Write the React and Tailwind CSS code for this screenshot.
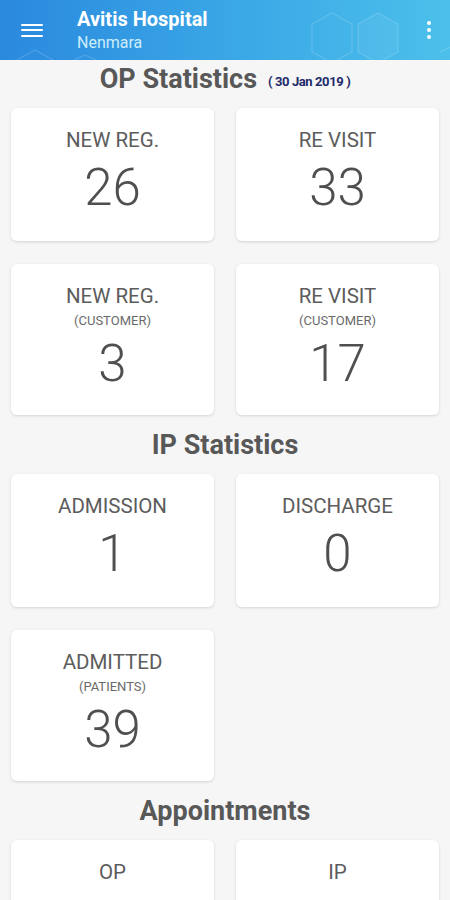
import React from 'react'

const opCards = [
  [{ label: 'NEW REG.', value: 26 }, { label: 'RE VISIT', value: 33 }],
  [{ label: 'NEW REG.', sub: '(CUSTOMER)', value: 3 }, { label: 'RE VISIT', sub: '(CUSTOMER)', value: 17 }],
]

const ipCards = [
  [{ label: 'ADMISSION', value: 1 }, { label: 'DISCHARGE', value: 0 }],
  [{ label: 'ADMITTED', sub: '(PATIENTS)', value: 39 }, null],
]

const HexBg = () => (
  <svg className="absolute inset-0 w-full h-full pointer-events-none" viewBox="0 0 450 60" preserveAspectRatio="none">
    <g fill="none" stroke="rgba(255,255,255,0.16)" strokeWidth="1.2">
      <path d="M332 13 L352 24 L352 52 L332 63 L312 52 L312 24 Z" />
      <path d="M378 13 L398 24 L398 52 L378 63 L358 52 L358 24 Z" fill="rgba(255,255,255,0.05)" />
      <path d="M35 50 L55 61 M35 50 L15 61" />
      <path d="M85 55 L100 62 M85 55 L70 62" />
      <path d="M440 52 L455 45" />
    </g>
  </svg>
)

const Header = () => (
  <div className="relative h-[60px] bg-gradient-to-r from-[#2b89de] via-[#3aa6e6] to-[#4cc0ea] flex items-center overflow-hidden">
    <HexBg />
    <div className="relative w-[77px] flex justify-center pr-[14px]">
      <div className="flex flex-col gap-[3.5px] w-[22px]">
        <span className="block h-[2px] bg-white rounded" />
        <span className="block h-[2px] bg-white rounded" />
        <span className="block h-[2px] bg-white rounded" />
      </div>
    </div>
    <div className="relative flex-1 flex flex-col">
      <span className="text-white font-bold text-[20px] leading-[22px]">Avitis Hospital</span>
      <span className="text-[#cdeefb] text-[16px] leading-[20px] mt-[3px]">Nenmara</span>
    </div>
    <div className="relative w-[46px] flex flex-col items-center gap-[3px] pl-[4px]">
      <span className="block w-[4px] h-[4px] rounded-full bg-white" />
      <span className="block w-[4px] h-[4px] rounded-full bg-white" />
      <span className="block w-[4px] h-[4px] rounded-full bg-white" />
    </div>
  </div>
)

const Heading = ({ children, date, top }) => (
  <div className={`flex items-baseline justify-center h-[36px] mb-[11px] ${top ? 'mt-[1px]' : 'mt-[12px]'}`}>
    <span className="text-[27px] leading-[36px] font-bold text-[#585858]">{children}</span>
    {date && (
      <span className="ml-[11px] text-[13px] font-bold text-[#1f2a6b] tracking-[-0.4px] relative top-[-2px]">( 30 Jan 2019 )</span>
    )}
  </div>
)

const Card = ({ item }) => {
  if (!item) return <div />
  return (
    <div className={`bg-white rounded-[6px] shadow-[0_1px_3px_rgba(0,0,0,0.14)] flex flex-col items-center text-[#5c5c5c] pt-[20px] ${item.sub ? 'h-[151px]' : 'h-[133px]'}`}>
      <span className="text-[20.5px] leading-[24px]">{item.label}</span>
      {item.sub && <span className="text-[13px] leading-[13px] mt-[6px] text-[#6a6a6a]">{item.sub}</span>}
      <span className={`text-[51px] leading-[50px] font-light text-[#4f4f4f] ${item.sub ? 'mt-[12px]' : 'mt-[11px]'}`}>{item.value}</span>
    </div>
  )
}

const Grid = ({ rows }) => (
  <div className="flex flex-col gap-[23px] px-[11px]">
    {rows.map((row, i) => (
      <div key={i} className="grid grid-cols-2 gap-[22px]">
        {row.map((item, j) => <Card key={j} item={item} />)}
      </div>
    ))}
  </div>
)

export default function App() {
  return (
    <div className="w-[450px] h-[900px] overflow-hidden bg-[#f6f6f6] font-['Roboto','Liberation_Sans',sans-serif]">
      <Header />
      <Heading top date>OP Statistics</Heading>
      <Grid rows={opCards} />
      <Heading>IP Statistics</Heading>
      <Grid rows={ipCards} />
      <Heading>Appointments</Heading>
      <div className="grid grid-cols-2 gap-[22px] px-[11px]">
        {['OP', 'IP'].map(l => (
          <div key={l} className="bg-white rounded-[6px] shadow-[0_1px_3px_rgba(0,0,0,0.14)] flex flex-col items-center text-[#5c5c5c] pt-[20px] h-[133px]">
            <span className="text-[20.5px] leading-[24px]">{l}</span>
          </div>
        ))}
      </div>
    </div>
  )
}
